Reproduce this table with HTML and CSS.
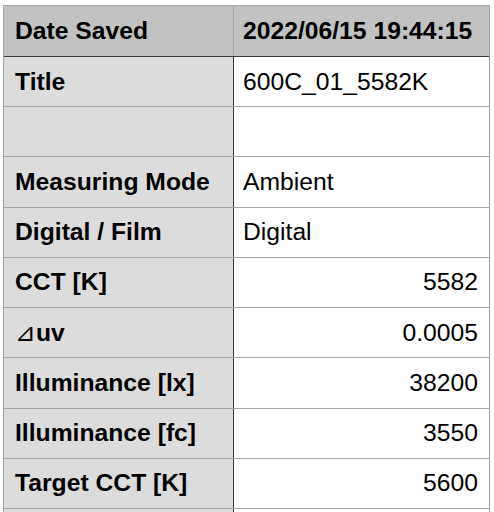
FILE: index.html
```html
<!DOCTYPE html>
<html>
<head>
<meta charset="utf-8">
<link rel="stylesheet" href="styles.css">
</head>
<body>
<div class="sheet">
  <div class="row head">
    <div class="cell label">Date Saved</div>
    <div class="cell value">2022/06/15 19:44:15</div>
  </div>
  <div class="row">
    <div class="cell label">Title</div>
    <div class="cell value">600C_01_5582K</div>
  </div>
  <div class="row">
    <div class="cell label"></div>
    <div class="cell value"></div>
  </div>
  <div class="row">
    <div class="cell label">Measuring Mode</div>
    <div class="cell value">Ambient</div>
  </div>
  <div class="row">
    <div class="cell label">Digital / Film</div>
    <div class="cell value">Digital</div>
  </div>
  <div class="row">
    <div class="cell label">CCT [K]</div>
    <div class="cell value num">5582</div>
  </div>
  <div class="row">
    <div class="cell label"><span class="tri">⊿</span>uv</div>
    <div class="cell value num">0.0005</div>
  </div>
  <div class="row">
    <div class="cell label">Illuminance [lx]</div>
    <div class="cell value num">38200</div>
  </div>
  <div class="row">
    <div class="cell label">Illuminance [fc]</div>
    <div class="cell value num">3550</div>
  </div>
  <div class="row">
    <div class="cell label">Target CCT [K]</div>
    <div class="cell value num">5600</div>
  </div>
  <div class="row last">
    <div class="cell label"></div>
    <div class="cell value"></div>
  </div>
</div>
</body>
</html>
```

FILE: styles.css
```css
html, body {
  margin: 0;
  padding: 0;
  background: #ffffff;
  height: 512px;
  overflow: hidden;
}
body {
  font-family: "Liberation Sans", Arial, Helvetica, sans-serif;
  font-size: 24.7px;
  color: #000000;
}
.sheet {
  margin: 5px 0 0 3px;
  width: 487px;
  box-sizing: border-box;
  border-top: 1px solid #a6a6a6;
  border-left: 1px solid #a6a6a6;
  border-right: 1px solid #a6a6a6;
}
.row {
  display: grid;
  grid-template-columns: 230px 1fr;
  height: 50.22px;
  box-sizing: border-box;
  border-bottom: 1px solid #a6a6a6;
}
.row.head {
  height: 51px;
  border-bottom: 1px solid #3a3a3a;
  background: #c1c2c1;
}
.row.last {
  height: 3px;
  border-bottom: none;
}
.cell {
  display: flex;
  align-items: center;
  box-sizing: border-box;
  white-space: nowrap;
}
.label {
  background: #dcdcdc;
  font-weight: bold;
  padding-left: 11px;
  border-right: 1px solid #333333;
}
.value {
  padding-left: 9px;
  padding-right: 11px;
}
.head .label {
  background: #c1c2c1;
  border-right: 1px solid #a6a6a6;
}
.head .value {
  font-weight: bold;
}
.num {
  justify-content: flex-end;
}
.tri {
  font-weight: normal;
  font-size: 25px;
  line-height: 1;
  font-family: "DejaVu Sans", sans-serif;
}
```
